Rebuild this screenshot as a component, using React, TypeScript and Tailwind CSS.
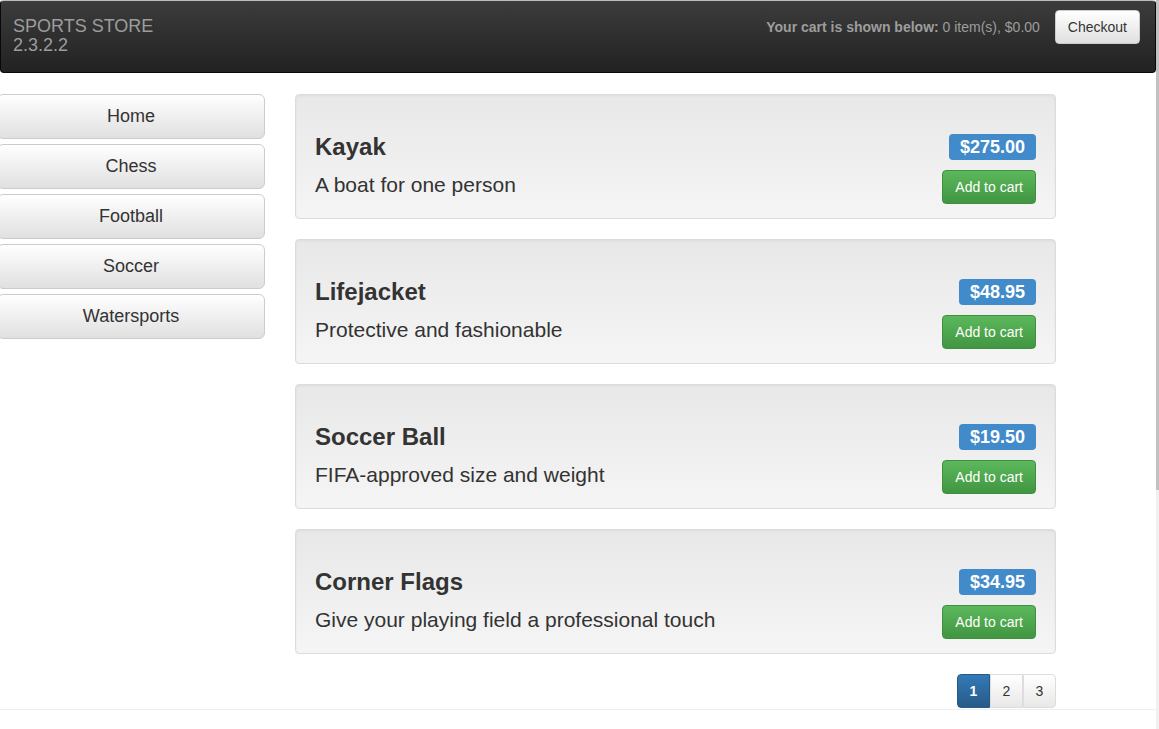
import React from 'react';

interface Product {
  name: string;
  description: string;
  price: number;
}

const products: Product[] = [
  { name: 'Kayak', description: 'A boat for one person', price: 275 },
  { name: 'Lifejacket', description: 'Protective and fashionable', price: 48.95 },
  { name: 'Soccer Ball', description: 'FIFA-approved size and weight', price: 19.5 },
  { name: 'Corner Flags', description: 'Give your playing field a professional touch', price: 34.95 },
];

const categories = ['Home', 'Chess', 'Football', 'Soccer', 'Watersports'];

function Navbar() {
  return (
    <div className="flex h-[73px] items-start justify-between rounded-[4px] border border-[#080808] border-t-[#bdbdbd] bg-gradient-to-b from-[#3c3c3c] to-[#222222]">
      <div className="pl-[12px] pt-[16px] text-[18px] leading-[19px] text-[#9d9d9d]">
        <div>SPORTS STORE</div>
        <div>2.3.2.2</div>
      </div>
      <div className="flex items-center pr-[15px] pt-[9px]">
        <span className="mr-[15px] text-[14px] text-[#9d9d9d]">
          <b>Your cart is shown below:</b> 0 item(s), $0.00
        </span>
        <button className="h-[34px] rounded-[4px] border border-[#ccc] bg-gradient-to-b from-white to-[#e0e0e0] px-[12px] text-[14px] text-[#333]">
          Checkout
        </button>
      </div>
    </div>
  );
}

function ProductWell({ product }: { product: Product }) {
  return (
    <div className="rounded-[4px] border border-[#dcdcdc] bg-gradient-to-b from-[#e8e8e8] to-[#f5f5f5] px-[19px] pb-[14px] pt-[39px] shadow-[inset_0_1px_3px_rgba(0,0,0,0.05)]">
      <div className="flex h-[26px] items-center justify-between">
        <h3 className="text-[24px] font-bold leading-[26px] text-[#333]">{product.name}</h3>
        <span className="rounded-[4px] bg-[#428bca] px-[11px] pb-[4px] pt-[4px] text-[18px] font-bold leading-[18px] text-white">
          ${product.price.toFixed(2)}
        </span>
      </div>
      <div className="mt-[10px] flex h-[34px] items-start justify-between">
        <p className="text-[21px] leading-[29px] text-[#333]">{product.description}</p>
        <button className="h-[34px] rounded-[4px] border border-[#3e8f3e] bg-gradient-to-b from-[#5cb85c] to-[#419641] px-[12px] text-[14px] text-white">
          Add to cart
        </button>
      </div>
    </div>
  );
}

function Pagination() {
  return (
    <div className="mt-[20px] flex justify-end">
      {[1, 2, 3].map((n, i) => (
        <button
          key={n}
          className={`h-[34px] w-[33px] border text-[14px] ${
            n === 1
              ? 'rounded-l-[4px] border-[#265a88] bg-gradient-to-b from-[#337ab7] to-[#265a88] font-bold text-white'
              : 'border-[#ddd] bg-gradient-to-b from-white to-[#e8e8e8] text-[#333]'
          } ${i === 2 ? 'rounded-r-[4px]' : ''}`}
        >
          {n}
        </button>
      ))}
    </div>
  );
}

export default function App() {
  return (
    <div className="flex h-[729px] w-[1159px] overflow-hidden bg-white font-['Liberation_Sans',Arial,sans-serif] text-[#333]">
      <div className="w-[1156px] shrink-0">
        <Navbar />
        <div className="mt-[21px] flex gap-[30px]">
          <div className="-ml-[3px] flex w-[268px] flex-col gap-[5px]">
            {categories.map((c) => (
              <button
                key={c}
                className="h-[45px] rounded-[6px] border border-[#ccc] bg-gradient-to-b from-white to-[#e0e0e0] text-[18px] text-[#333]"
              >
                {c}
              </button>
            ))}
          </div>
          <div className="w-[761px]">
            <div className="flex flex-col gap-[20px]">
              {products.map((p) => (
                <ProductWell key={p.name} product={p} />
              ))}
            </div>
            <Pagination />
          </div>
        </div>
        <div className="mt-px border-t border-[#eee]" />
      </div>
      <div className="flex w-[3px] flex-col bg-[#f1f1f1]">
        <div className="h-[490px] bg-[#c1c1c1]" />
      </div>
    </div>
  );
}
